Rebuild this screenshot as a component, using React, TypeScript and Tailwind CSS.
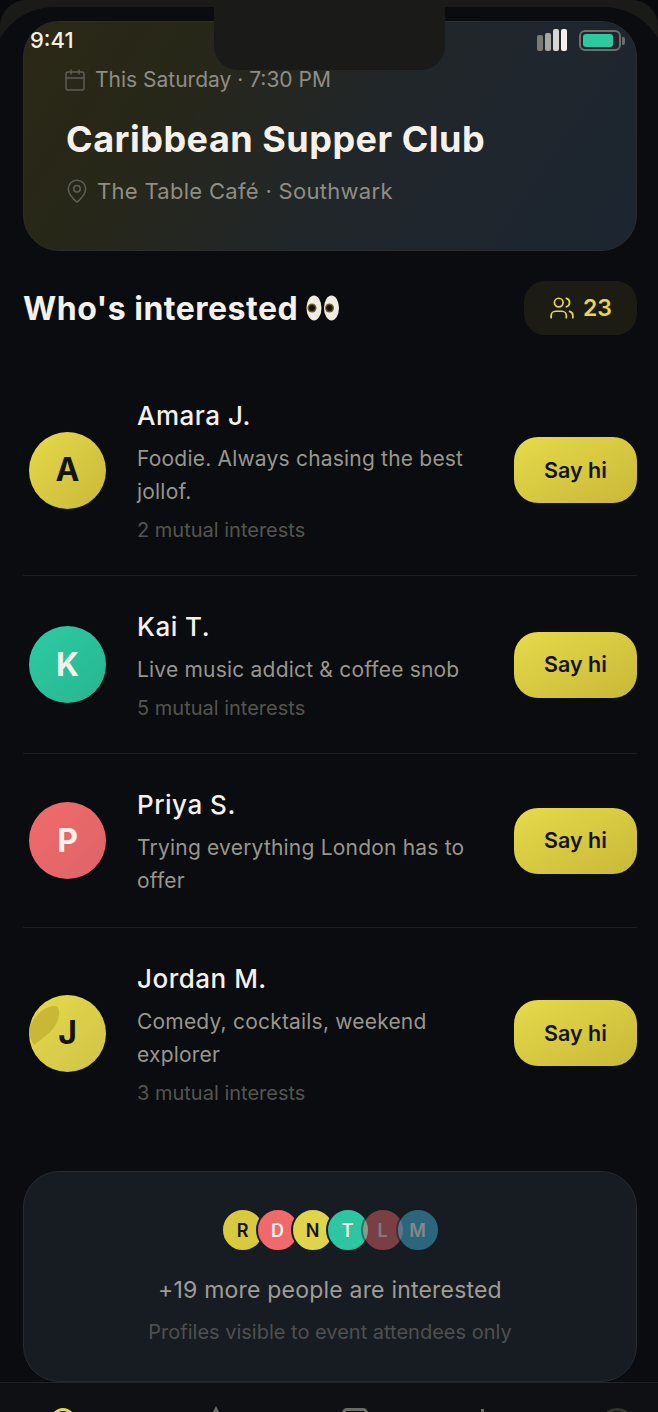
import { Calendar, MapPin, Users } from 'lucide-react';

type Person = {
  name: string;
  bio: string;
  mutual?: string;
  initial: string;
  avatar: string;
  letter: string;
  blob?: boolean;
};

const people: Person[] = [
  { name: 'Amara J.', bio: 'Foodie. Always chasing the best jollof.', mutual: '2 mutual interests', initial: 'A', avatar: 'from-[#e6da4a] to-[#c9b838]', letter: 'text-[#14140f]' },
  { name: 'Kai T.', bio: 'Live music addict & coffee snob', mutual: '5 mutual interests', initial: 'K', avatar: 'from-[#2dcba3] to-[#27b591]', letter: 'text-[#f5f1ea]' },
  { name: 'Priya S.', bio: 'Trying everything London has to offer', initial: 'P', avatar: 'from-[#f26b6b] to-[#dc6468]', letter: 'text-[#f5f1ea]' },
  { name: 'Jordan M.', bio: 'Comedy, cocktails, weekend explorer', mutual: '3 mutual interests', initial: 'J', avatar: 'from-[#e6da4a] to-[#cfc348]', letter: 'text-[#14140f]', blob: true },
];

const stack = [
  { l: 'R', c: 'bg-[#d9c93f] text-[#14140f]' },
  { l: 'D', c: 'bg-[#f06a6c] text-[#f5f1ea]' },
  { l: 'N', c: 'bg-[#e0d44a] text-[#14140f]' },
  { l: 'T', c: 'bg-[#2dc6a0] text-[#f5f1ea]' },
  { l: 'L', c: 'bg-[#f06a6c] text-[#f5f1ea] opacity-45' },
  { l: 'M', c: 'bg-[#3fb0d4] text-[#f5f1ea] opacity-50' },
];

const Eyes = () => (
  <svg width="34" height="26" viewBox="0 0 34 26" className="shrink-0">
    <ellipse cx="8" cy="13" rx="7.5" ry="12.5" fill="#f1ece2" />
    <ellipse cx="25.5" cy="13" rx="7.5" ry="12.5" fill="#f1ece2" />
    <circle cx="6" cy="13" r="4.5" fill="#6b5a20" />
    <circle cx="23.5" cy="13" r="4.5" fill="#6b5a20" />
    <circle cx="6" cy="13" r="3" fill="#15130c" />
    <circle cx="23.5" cy="13" r="3" fill="#15130c" />
  </svg>
);

const Row = ({ p, last }: { p: Person; last: boolean }) => (
  <div className={`flex items-center pl-[6px] pt-[32px] pb-[30px] ${last ? '' : 'border-b border-[#1a1d21]'}`}>
    <div className={`relative shrink-0 -mt-[2px] w-[77px] h-[77px] rounded-full overflow-hidden bg-gradient-to-br ${p.avatar} flex items-center justify-center`}>
      {p.blob && (
        <svg width="77" height="77" viewBox="0 0 77 77" className="absolute inset-0">
          <path d="M0 34C4 22 14 11 26 11C32 11 31 24 26 31C21 39 12 44 5 50C2 46 0 40 0 34Z" fill="#c9b836" />
        </svg>
      )}
      <span className={`relative text-[32px] font-bold ${p.letter}`}>{p.initial}</span>
    </div>
    <div className="flex-1 min-w-0 ml-[31px] mr-[24px]">
      <div className="text-[26px] leading-[37px] tracking-[0.5px] font-medium text-[#f5f1ea]">{p.name}</div>
      <div className="mt-[8px] text-[21px] leading-[33px] tracking-[0.2px] text-[#99968e]">{p.bio}</div>
      {p.mutual && <div className="mt-[7px] text-[20px] leading-[30px] text-[#55554f]">{p.mutual}</div>}
    </div>
    <button className="shrink-0 -mt-[2px] w-[123px] h-[66px] rounded-[24px] bg-gradient-to-br from-[#e6da4a] to-[#c9b838] text-[21.5px] font-semibold text-[#14140f]">
      Say hi
    </button>
  </div>
);

export default function App() {
  return (
    <div className="h-[1412px] w-[658px] overflow-hidden bg-[#08090c] font-['Inter',sans-serif]">
      <div className="relative h-full rounded-t-[26px] overflow-hidden bg-[#1a1a18] pt-[7px]">
        <div className="relative -mx-[9px] h-[1405px] rounded-t-[64px] bg-[#0a0c10] overflow-hidden">
          <div className="pl-[32px] pr-[30px] pt-[14px] h-[1375px] overflow-hidden">
            <div className="h-[230px] rounded-[36px] border border-[#2b2e2d] bg-[linear-gradient(125deg,#2b2815_0%,#272719_25%,#21262a_55%,#1c2531_100%)] pl-[42px] pt-[42px]">
              <div className="flex items-center gap-[8px] h-[32px] text-[21px] text-[#8f8d85]">
                <Calendar size={24} strokeWidth={1.4} className="-ml-[3px] text-[#5f5f59]" />
                This Saturday · 7:30 PM
              </div>
              <div className="mt-[20px] text-[36px] leading-[46px] tracking-[0.5px] font-bold text-[#f5f1ea]">Caribbean Supper Club</div>
              <div className="mt-[13px] flex items-center gap-[7px] h-[32px] text-[22px] tracking-[0.3px] text-[#8f8d85]">
                <MapPin size={26} strokeWidth={1.4} className="-ml-[2px] text-[#5f5f59]" />
                The Table Café · Southwark
              </div>
            </div>

            <div className="mt-[30px] flex items-center justify-between">
              <div className="flex items-center gap-[8px] text-[32px] tracking-[0.5px] font-bold text-[#f5f1ea]">
                <span className="pt-[2px]">Who's interested</span>
                <Eyes />
              </div>
              <div className="flex items-center justify-center gap-[8px] w-[113px] h-[54px] rounded-[21px] bg-[#1c1c14] text-[23px] font-semibold text-[#e4d84a]">
                <Users size={26} strokeWidth={1.6} />
                23
              </div>
            </div>

            <div className="mt-[30px]">
              {people.map((p, i) => (
                <Row key={p.name} p={p} last={i === people.length - 1} />
              ))}
            </div>

            <div className="mt-[33px] h-[211px] rounded-[36px] border border-[#272c2e] bg-[#171c23] flex flex-col items-center pt-[36px]">
              <div className="flex pl-[9px]">
                {stack.map((s) => (
                  <div key={s.l} className={`-ml-[9px] w-[44px] h-[44px] rounded-full border-2 border-[#171c23] flex items-center justify-center text-[18px] font-semibold ${s.c}`}>
                    {s.l}
                  </div>
                ))}
              </div>
              <div className="mt-[22px] text-[23px] leading-[32px] tracking-[0.2px] text-[#a09d95]">+19 more people are interested</div>
              <div className="mt-[11px] text-[20px] leading-[30px] text-[#4f504e]">Profiles visible to event attendees only</div>
            </div>
          </div>

          <div className="h-[30px] border-t border-[#1f2326] bg-[#0e1013] relative overflow-hidden">
            <div className="absolute left-[60px] top-[25px] w-[24px] h-[24px] rounded-full border-[3px] border-[#e4d84a]" />
            <svg width="24" height="24" viewBox="0 0 24 24" className="absolute left-[213px] top-[23px]">
              <path d="M12 0L24 24H0Z" fill="#6b6b66" />
            </svg>
            <div className="absolute left-[351px] top-[25px] w-[26px] h-[24px] rounded-[5px] border-[3px] border-[#6b6b66]" />
            <div className="absolute left-[490px] top-[26px] w-[3px] h-[20px] bg-[#6b6b66]" />
            <div className="absolute left-[609px] top-[25px] w-[34px] h-[34px] rounded-full border-[3px] border-[#33332f]" />
          </div>
        </div>

        <div className="absolute left-[214px] top-0 w-[231px] h-[70px] rounded-b-[24px] bg-[#1a1a18]" />
        <div className="absolute left-[30px] top-[26px] text-[22px] leading-[28px] font-medium text-[#f5f1ea]">9:41</div>
        <div className="absolute left-[537px] top-[29px] h-[22px] flex items-end gap-[2px]">
          <div className="w-[6px] h-[16px] rounded-[2px] bg-[#7a7a76]" />
          <div className="w-[6px] h-[18px] rounded-[2px] bg-[#a8a6a0]" />
          <div className="w-[6px] h-[22px] rounded-[2px] bg-[#d8d6d0]" />
          <div className="w-[6px] h-[22px] rounded-[2px] bg-[#f5f1ea]" />
        </div>
        <div className="absolute left-[579px] top-[30px] flex items-center gap-[1px]">
          <div className="w-[42px] h-[21px] rounded-[6px] border-2 border-[#6e6e6a] p-[2px]">
            <div className="w-[30px] h-full rounded-[3px] bg-[#2dc9a0]" />
          </div>
          <div className="w-[3px] h-[8px] rounded-r-[2px] bg-[#6e6e6a]" />
        </div>
      </div>
    </div>
  );
}
